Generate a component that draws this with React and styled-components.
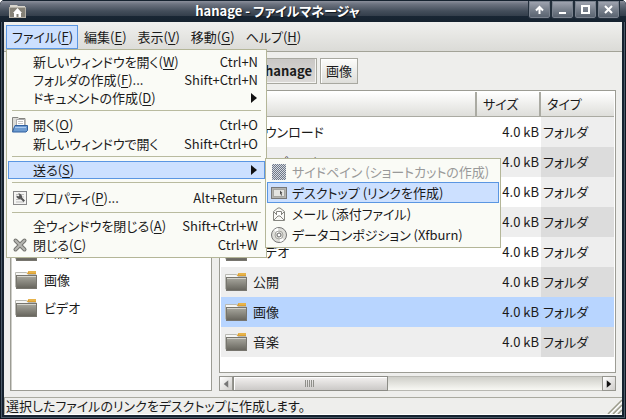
import React from "react";
import styled, { createGlobalStyle, css } from "styled-components";

const GlobalStyle = createGlobalStyle`
  * { box-sizing: border-box; }
  body {
    margin: 0;
    background: #fff;
    color: #1a1a1a;
    font-family: "Noto Sans CJK JP", sans-serif;
    font-size: 13px;
    line-height: 18px;
    font-feature-settings: "palt";
  }
  button {
    font: inherit;
    font-feature-settings: inherit;
    color: inherit;
    margin: 0;
    padding: 0;
    border: 0;
    background: none;
  }
  ul { list-style: none; margin: 0; padding: 0; }
  u { text-underline-offset: 2px; }
`;

const Window = styled.div`
  display: flex;
  flex-direction: column;
  min-height: 100vh;
  padding: 0 4px 4px;
  border-radius: 5px 5px 0 0;
  background: #16222f;
  box-shadow: inset 0 0 0 1px #0d1620, inset 0 0 0 2px #4a5968;
`;

const TitleBar = styled.header`
  display: flex;
  align-items: flex-start;
  height: 22px;
  margin: 0 -4px;
  padding: 0 6px 0 9px;
  border-radius: 5px 5px 0 0;
  background: linear-gradient(#16222f 0 1px, #8b8f9b 1px, #6d7380 4px, #444e5b 11px, #333e4b 16px, #192634 16px, #16222f);
`;

const AppIcon = styled.svg`
  flex: none;
  margin-top: 4px;
`;

const Title = styled.h1`
  flex: 1;
  margin: 2px 0 0;
  color: #fff;
  font-size: 13px;
  line-height: 18px;
  font-weight: 700;
  text-align: center;
  text-shadow: 1px 1px 1px #0d1620;
`;

const WindowButton = styled.button`
  display: grid;
  place-items: center;
  width: 23px;
  height: 18px;
  margin-top: 1px;
  border: 1px solid #232f3c;
  border-top: 0;
  border-radius: 0 0 3px 3px;
  background: linear-gradient(#a3a7b3, #78808c 50%, #56606d);
  box-shadow: inset 0 0 0 1px #7a828e;
`;

const Client = styled.div`
  flex: 1;
  display: flex;
  flex-direction: column;
  background: #eeeeec;
`;

const MenuBar = styled.ul`
  display: flex;
  padding: 3px 2px 2px;
  background: linear-gradient(#f0f0ee, #dbdbd7);
  border-bottom: 1px solid #a3a398;
`;

const MenuBarItem = styled.li`
  position: relative;
`;

const MenuBarButton = styled.button`
  height: 24px;
  padding: 0 4px 0 5px;
  border: 1px solid ${(p) => (p.$open ? "#5a96e2" : "transparent")};
  background: ${(p) => (p.$open ? "#cce0ff" : "transparent")};
`;

const MenuList = styled.ul`
  position: absolute;
  z-index: 2;
  border: 1px solid #b4b698;
  background: #fafbf6;
  white-space: nowrap;
`;

const FileMenu = styled(MenuList)`
  top: 100%;
  left: 0;
  width: 261px;
  padding: 3px 1px 2px;
`;

const SubMenu = styled(MenuList)`
  top: -3px;
  left: 100%;
  width: 236px;
  padding: 2px 1px;
`;

const MenuEntry = styled.li`
  position: relative;
`;

const MenuButton = styled.button`
  display: grid;
  grid-template-columns: 16px 1fr auto;
  align-items: center;
  column-gap: 5px;
  width: 100%;
  height: ${(p) => p.$height}px;
  padding: 0 6px 0 3px;
  border: 1px solid transparent;
  line-height: 16px;
  text-align: left;
  ${(p) => p.$active && css`
    border-color: #5a96e2;
    background: #cce0ff;
  `}
  &:disabled { color: #999; }
`;

const EntryIcon = styled.span`
  display: flex;
`;

const Separator = styled.li`
  height: 1px;
  margin: 3px 4px 4px;
  background: #b9bb9f;
`;

const PathBar = styled.nav`
  display: flex;
  gap: 3px;
  padding: 6px 6px 6px 227px;
`;

const PathButton = styled.button`
  height: 26px;
  padding: 0 5px;
  border: 1px solid #a8a8a0;
  background: linear-gradient(#fcfcfa, #dededa);
  box-shadow: inset 1px 1px #fff;
  ${(p) => p.$current && css`
    width: 86px;
    padding-right: 4px;
    text-align: right;
    font-weight: 700;
    background: linear-gradient(#c9c7c5, #dcdad8);
    box-shadow: inset -1px -1px #f4f4f2;
  `}
`;

const Panes = styled.div`
  flex: 1;
  display: flex;
  gap: 7px;
  padding: 0 6px 6px;
`;

const Sidebar = styled.aside`
  width: 202px;
  padding-top: 7px;
  border: 1px solid #9c9c94;
  background: #fff;
  box-shadow: inset 1px 0 #cfcfca;
`;

const Place = styled.a`
  display: flex;
  align-items: center;
  gap: 7px;
  height: 28px;
  padding-left: 4px;
  color: inherit;
  text-decoration: none;
`;

const Main = styled.main`
  flex: 1;
  min-width: 0;
  display: flex;
  flex-direction: column;
  gap: 3px;
`;

const ListPane = styled.div`
  flex: 1;
  padding: 1px;
  border: 1px solid #9c9c94;
  background: #fff;
`;

const FileTable = styled.table`
  width: 100%;
  table-layout: fixed;
  border-collapse: separate;
  border-spacing: 0;
`;

const HeadCell = styled.th`
  width: ${(p) => p.$width};
  height: 25px;
  padding: 0 6px;
  border-right: ${(p) => (p.$last ? 0 : 2)}px solid #aaaaa2;
  border-bottom: 1px solid #aaaaa2;
  background: linear-gradient(#fff, #dededa);
  font-weight: 400;
  text-align: left;
`;

const FileRow = styled.tr`
  background: ${(p) => (p.$selected ? "#b8d5ff" : "#fff")};
  & > td:last-child { background: ${(p) => (p.$selected ? "#b8d5ff" : "#eee")}; }
  ${(p) => !p.$selected && css`
    &:nth-child(even) { background: #eee; }
    &:nth-child(even) > td:last-child { background: #dcdcdc; }
  `}
`;

const Cell = styled.td`
  height: 30px;
  padding: 0 2px;
  text-align: ${(p) => (p.$right ? "right" : "left")};
  white-space: nowrap;
`;

const FileName = styled.span`
  display: flex;
  align-items: center;
  gap: 6px;
  padding-left: 2px;
`;

const ScrollBar = styled.div`
  display: flex;
  height: 15px;
  border: 1px solid #b8b8b2;
  background: linear-gradient(#cfcfc9, #f8f8f4);
`;

const ScrollButton = styled.button`
  display: grid;
  place-items: center;
  width: 14px;
  height: 15px;
  margin: -1px;
  border: 1px solid #96968f;
  background: linear-gradient(135deg, #fff, #cfcdca);
`;

const ScrollTrack = styled.div`
  flex: 1;
  margin: -1px 1px;
`;

const ScrollThumb = styled.div`
  display: grid;
  place-items: center;
  width: 42%;
  height: 15px;
  border: 1px solid #8c8c86;
  background: linear-gradient(#f3f1f0, #cbc9c7);
  box-shadow: inset 1px 1px #fff;
`;

const StatusBar = styled.footer`
  display: flex;
  justify-content: space-between;
  align-items: flex-end;
  height: 18px;
  padding-left: 1px;
  border: 1px solid #aaaaa0;
  border-right: 0;
  border-bottom-color: #fff;
  line-height: 16px;
`;

const FolderIcon = () => (
  <svg width="22" height="18" viewBox="0 0 22 18" aria-hidden="true">
    <defs>
      <linearGradient id="folderFront" x1="0" y1="0" x2="0" y2="1">
        <stop offset="0" stopColor="#aaa9a0" />
        <stop offset="1" stopColor="#66645c" />
      </linearGradient>
    </defs>
    <path d="M.5 16V1.500h11l1.500 2h8V16z" fill="#f6f6f4" stroke="#b9b9b3" />
    <path d="M12 2.500 13.500 0H21v3h-8.500z" fill="#dca033" />
    <path d="M14 1h7" stroke="#f2c765" />
    <rect x="1.500" y="4.500" width="20" height="13" fill="url(#folderFront)" stroke="#77756e" />
    <path d="M2 5.500h19" stroke="#d4d3cc" />
  </svg>
);

const OpenIcon = () => (
  <svg width="16" height="16" viewBox="0 0 16 16" aria-hidden="true">
    <path d="M.5 14V.5h5.500l1 1h6V9" fill="#dcdcd8" stroke="#858580" />
    <path d="M4.500 10V2.500h8V10" fill="#fff" stroke="#aaa" />
    <path d="M6 4.500h5M6 6.500h5" stroke="#c4c4c4" />
    <path d="m2.500 9.500.5-1h12.500v5l-1.500 1.500H.5z" fill="#6d9bd0" stroke="#2f5f9f" />
    <path d="M3 10.500h11" stroke="#a9c8ee" />
  </svg>
);

const PropertiesIcon = () => (
  <svg width="16" height="16" viewBox="0 0 16 16" aria-hidden="true">
    <rect x="1.500" y="1.500" width="13" height="13" fill="#f4f4f2" stroke="#888" />
    <path d="M4 4.500h8M4 7h8M4 9.500h8M4 12h8" stroke="#bbb" />
    <path d="M6 3.500 7.500 5 6.500 6.500 4.500 5.500c0 3 2 4 4 3.200l3 3.300 1.500-1.500-3-3C10.500 5 8 3 6 3.500z" fill="#555" />
  </svg>
);

const CloseIcon = () => (
  <svg width="16" height="16" viewBox="0 0 16 16" aria-hidden="true">
    <path d="m3.500 3.500 9 9m0-9-9 9" stroke="#747470" strokeWidth="4" strokeLinecap="round" />
    <path d="m3.500 3.500 9 9m0-9-9 9" stroke="#b6b6b1" strokeWidth="2" strokeLinecap="round" />
  </svg>
);

const SidePaneIcon = () => (
  <svg width="16" height="16" viewBox="0 0 16 16" aria-hidden="true">
    <defs>
      <pattern id="checks" width="2" height="2" patternUnits="userSpaceOnUse">
        <rect width="2" height="2" fill="#d5d9df" />
        <path d="M0 0h1v1H0zM1 1h1v1H1z" fill="#6d7888" />
      </pattern>
    </defs>
    <rect x="1" width="14" height="16" rx="1" fill="url(#checks)" />
  </svg>
);

const DesktopIcon = () => (
  <svg width="16" height="16" viewBox="0 0 16 16" aria-hidden="true">
    <rect x=".5" y="2.500" width="15" height="11" fill="#b4b4b0" stroke="#777" />
    <rect x="2.500" y="4.500" width="11" height="7" fill="#e4e4e1" stroke="#a6a6a2" />
    <path d="m9 5.500 2.500 2.500-1 .3.500 2.200h-1L9.500 8.800 9 9z" fill="#4c4c4c" />
  </svg>
);

const MailIcon = () => (
  <svg width="16" height="16" viewBox="0 0 16 16" fill="none" stroke="#85857f" aria-hidden="true">
    <path d="M2.500 14.500v-9L7 2h2l4.500 3.500v9z" fill="#f8f8f5" />
    <path d="m3 14 4-4h2l4 4M3 6l3 3m7-3-3 3" />
    <path d="M5.500 9V5.500h5V9" fill="#fff" />
  </svg>
);

const DiscIcon = () => (
  <svg width="16" height="16" viewBox="0 0 16 16" aria-hidden="true">
    <circle cx="8" cy="8" r="7.500" fill="#deded9" stroke="#777" />
    <path d="M8 8 3 3a7 7 0 0 1 4-2zM8 8l5 5a7 7 0 0 1-4 2z" fill="#fff" />
    <circle cx="8" cy="8" r="4" fill="none" stroke="#a7a7a2" />
    <circle cx="8" cy="8" r="2" fill="#fff" stroke="#666" />
  </svg>
);

const Triangle = ({ left, size = 8, color = "#111" }) => (
  <svg width={size} height={size + 2} viewBox="0 0 8 10" aria-hidden="true">
    <path d={left ? "M7 0v10L1 5z" : "M1 0v10l6-5z"} fill={color} />
  </svg>
);

const Grip = () => (
  <svg width="10" height="7" viewBox="0 0 10 7" aria-hidden="true">
    <path d="M.5 0v7m2-7v7m2-7v7m2-7v7m2-7v7" stroke="#8f8f8a" />
  </svg>
);

const ResizeGrip = () => (
  <svg width="15" height="15" viewBox="0 0 15 15" aria-hidden="true">
    <path d="M1 15 15 1M6 15l9-9M11 15l4-4" stroke="#9c9c8c" strokeWidth="1.500" />
    <path d="M3 15 15 3M8 15l7-7" stroke="#fff" />
  </svg>
);

const windowControls = [
  ["シェード", <path d="M6.500 11V4M3 7.500 6.500 4 10 7.500" />],
  ["最小化", <path d="M3 10h7" />],
  ["最大化", <path d="M3 3h7v7H3z" />],
  ["閉じる", <path d="m3 3 7 7m0-7-7 7" />],
];

const fileEntries = [
  { label: "新しいウィンドウを開く", accel: "W", keys: "Ctrl+N" },
  { label: "フォルダの作成", accel: "F", more: true, keys: "Shift+Ctrl+N" },
  { label: "ドキュメントの作成", accel: "D", arrow: true },
  null,
  { label: "開く", accel: "O", keys: "Ctrl+O", icon: <OpenIcon />, height: 20 },
  { label: "新しいウィンドウで開く", keys: "Shift+Ctrl+O" },
  null,
  {
    label: "送る",
    accel: "S",
    arrow: true,
    active: true,
    submenu: [
      { label: "サイドペイン (ショートカットの作成)", icon: <SidePaneIcon />, disabled: true },
      { label: "デスクトップ (リンクを作成)", icon: <DesktopIcon />, active: true },
      { label: "メール (添付ファイル)", icon: <MailIcon /> },
      { label: "データコンポジション (Xfburn)", icon: <DiscIcon /> },
    ],
  },
  null,
  { label: "プロパティ", accel: "P", more: true, keys: "Alt+Return", icon: <PropertiesIcon />, height: 22 },
  null,
  { label: "全ウィンドウを閉じる", accel: "A", keys: "Shift+Ctrl+W" },
  { label: "閉じる", accel: "C", keys: "Ctrl+W", icon: <CloseIcon />, height: 20 },
];

const menus = [["ファイル", "F"], ["編集", "E"], ["表示", "V"], ["移動", "G"], ["ヘルプ", "H"]];
const places = ["hanage", "ゴミ箱", "デスクトップ", "システム", "音楽", "公開", "画像", "ビデオ"];
const files = ["ダウンロード", "テンプレート", "デスクトップ", "ドキュメント", "ビデオ", "公開", "画像", "音楽"];

const Label = ({ text, accel, more }) => (
  <span>
    {text}
    {accel && <>(<u>{accel}</u>)</>}
    {more && "..."}
  </span>
);

const Entry = ({ entry, height = 18 }) => (
  <MenuEntry>
    <MenuButton type="button" $height={entry.height || height} $active={entry.active} disabled={entry.disabled}>
      <EntryIcon>{entry.icon}</EntryIcon>
      <Label text={entry.label} accel={entry.accel} more={entry.more} />
      {entry.arrow ? <Triangle /> : <span>{entry.keys}</span>}
    </MenuButton>
    {entry.submenu && (
      <SubMenu>
        {entry.submenu.map((item) => <Entry key={item.label} entry={item} height={21} />)}
      </SubMenu>
    )}
  </MenuEntry>
);

export default function App() {
  return (
    <>
      <GlobalStyle />
      <Window>
        <TitleBar>
          <AppIcon width="18" height="14" viewBox="0 0 18 14" aria-hidden="true">
            <path d="M1 3V1h7l1 1h7v3H1z" fill="#d8d5cd" />
            <rect x=".5" y="3.500" width="16" height="10" fill="#858177" stroke="#b5b1a7" />
            <path d="m4 9 4.500-5L13 9h-1v4H9.500v-3h-2v3H5V9z" fill="#fff" />
          </AppIcon>
          <Title>hanage - ファイルマネージャ</Title>
          {windowControls.map(([name, shape]) => (
            <WindowButton key={name} type="button" aria-label={name}>
              <svg width="13" height="13" viewBox="0 0 13 13" fill="none" stroke="#fff" strokeWidth="2">{shape}</svg>
            </WindowButton>
          ))}
        </TitleBar>
        <Client>
          <MenuBar>
            {menus.map(([text, accel], i) => (
              <MenuBarItem key={text}>
                <MenuBarButton type="button" $open={i === 0}>
                  <Label text={text} accel={accel} />
                </MenuBarButton>
                {i === 0 && (
                  <FileMenu>
                    {fileEntries.map((entry, n) =>
                      entry ? <Entry key={entry.label} entry={entry} /> : <Separator key={n} role="separator" />
                    )}
                  </FileMenu>
                )}
              </MenuBarItem>
            ))}
          </MenuBar>
          <PathBar>
            <PathButton type="button" $current>hanage</PathButton>
            <PathButton type="button">画像</PathButton>
          </PathBar>
          <Panes>
            <Sidebar>
              {places.map((name) => (
                <Place key={name} href="#"><FolderIcon />{name}</Place>
              ))}
            </Sidebar>
            <Main>
              <ListPane>
                <FileTable>
                  <thead>
                    <tr>
                      <HeadCell>名前</HeadCell>
                      <HeadCell $width="64px">サイズ</HeadCell>
                      <HeadCell $width="73px" $last>タイプ</HeadCell>
                    </tr>
                  </thead>
                  <tbody>
                    {files.map((name, i) => (
                      <FileRow key={name} $selected={i === 6}>
                        <Cell><FileName><FolderIcon />{name}</FileName></Cell>
                        <Cell $right>4.0 kB</Cell>
                        <Cell>フォルダ</Cell>
                      </FileRow>
                    ))}
                  </tbody>
                </FileTable>
              </ListPane>
              <ScrollBar>
                <ScrollButton type="button" aria-label="左へ"><Triangle left size={6} color="#777" /></ScrollButton>
                <ScrollTrack><ScrollThumb><Grip /></ScrollThumb></ScrollTrack>
                <ScrollButton type="button" aria-label="右へ"><Triangle size={6} /></ScrollButton>
              </ScrollBar>
            </Main>
          </Panes>
          <StatusBar>
            選択したファイルのリンクをデスクトップに作成します。
            <ResizeGrip />
          </StatusBar>
        </Client>
      </Window>
    </>
  );
}
